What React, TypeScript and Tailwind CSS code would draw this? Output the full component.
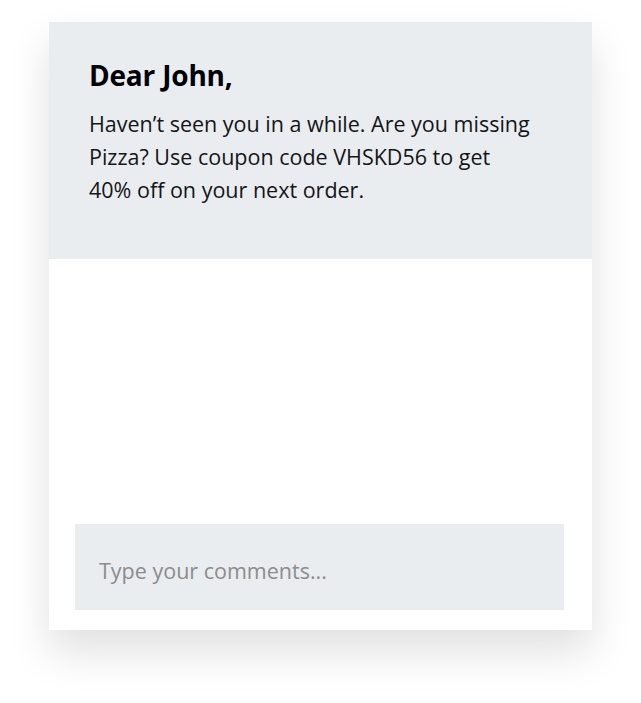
export default function App() {
  return (
    <div
      className="min-h-screen bg-white pt-[22px] pl-[49px]"
      style={{ fontFamily: '"Open Sans", "Liberation Sans", sans-serif' }}
    >
      <div className="w-[543px] h-[608px] bg-white flex flex-col shadow-[0_22px_40px_rgba(0,0,0,0.12)]">
        {/* Message */}
        <div className="h-[237px] bg-[#e9edf0] px-10 pt-[35px]">
          <h2 className="text-[28px] leading-[36px] font-bold text-black tracking-[-0.2px]">Dear John,</h2>
          <p className="mt-[14px] max-w-[445px] text-[21.5px] leading-[33px] text-[#151515]">
            Haven’t seen you in a while. Are you missing Pizza? Use coupon code VHSKD56 to get 40% off on your next order.
          </p>
        </div>

        <div className="flex-1" />

        {/* Comment box */}
        <div className="ml-[26px] mr-[28px] mb-5">
          <input
            type="text"
            placeholder="Type your comments..."
            className="block w-full h-[86px] bg-[#e9edf0] pl-6 pr-6 pt-[6px] text-[21.5px] text-[#333] placeholder:text-[#8c8c8c] outline-none"
          />
        </div>
      </div>
    </div>
  )
}
